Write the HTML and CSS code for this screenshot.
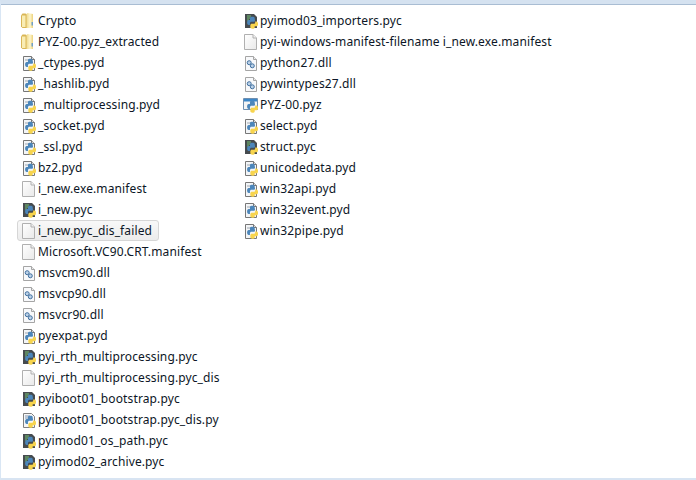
FILE: index.html
```html
<!DOCTYPE html>
<html lang="en">
<head>
<meta charset="utf-8">
<title>Files</title>
<link rel="stylesheet" href="styles.css">
</head>
<body>
<svg class="defs" width="0" height="0" aria-hidden="true">
  <defs>
    <linearGradient id="fg" x1="0" y1="0" x2="1" y2="0"><stop offset="0" stop-color="#efd98c"/><stop offset=".55" stop-color="#fdf5cb"/><stop offset="1" stop-color="#ecd27c"/></linearGradient>
    <linearGradient id="pg" x1="0" y1="0" x2="1" y2="1"><stop offset="0" stop-color="#ffffff"/><stop offset="1" stop-color="#e9e9e9"/></linearGradient>
    <g id="snake">
      <path d="M6.500 6h3.500V4.500C10 3.500 9 3.200 7.500 3.200S5 3.700 5 4.700V6.500H3.700C2.500 6.500 2 7.800 2 9.200s.6 2.600 1.700 2.600H5V10c0-1 .7-1.700 1.700-1.700H9c.8 0 1.300-.5 1.300-1.300V6z" fill="#4c86ba"/>
      <path d="M10.500 8h1.300c1.200 0 1.700 1.300 1.700 2.700s-.5 2.500-1.700 2.500H10v1.300c0 1-1 1.300-2.300 1.300S5.400 15 5.400 14v-2c0-1 .7-1.600 1.600-1.600h2.300c.8 0 1.200-.6 1.200-1.300z" fill="#f7d44e"/>
    </g>
    <symbol id="folder" viewBox="0 0 16 16">
      <path d="M1 2.500 2.500 .5h3L7 1.500V15H2.500L1 13.500z" fill="#d9b656"/>
      <path d="M2 2.500h3.500V14H2z" fill="#f9edb4"/>
      <path d="M6.500 1 7.500 0 13 1v14H6.500z" fill="url(#fg)"/>
      <path d="M11.500 9H13v3.500h-1.500z" fill="#6f9fc9"/>
    </symbol>
    <symbol id="page" viewBox="0 0 16 16">
      <path d="M2.500.5h8.500l3.500 3.500v11.500h-12z" fill="url(#pg)" stroke="#b0b0b0"/>
      <path d="M11 .5v3.500h3.500" fill="#f1f1f1" stroke="#b0b0b0"/>
    </symbol>
    <symbol id="pyd" viewBox="0 0 16 16">
      <path d="M3.500 1.500h8l3 3v11h-11z" fill="#f3f5f7" stroke="#777"/>
      <path d="M11.500 1.500v3h3" fill="#d9d9d9" stroke="#777"/>
      <path d="M5 4h4v2H5z" fill="#c9ced4"/>
      <use href="#snake" transform="translate(3.200 .8) scale(.95)"/>
    </symbol>
    <symbol id="pyc" viewBox="0 0 16 16">
      <path d="M3 1h9l3 3v11H3z" fill="#464b4f"/>
      <path d="M5 3h4M5 5h3M5 7h2" stroke="#74c274"/>
      <use href="#snake" transform="translate(3.200 .8) scale(.95)"/>
    </symbol>
    <symbol id="dis" viewBox="0 0 16 16">
      <path d="M3.500 1.500h8l3 3v11h-11z" fill="#f7f7f7" stroke="#808080"/>
      <path d="M5 4h5M5 6h4" stroke="#7f97b3"/>
      <use href="#snake" transform="translate(3.200 .8) scale(.95)"/>
    </symbol>
    <symbol id="dll" viewBox="0 0 16 16">
      <path d="M3.500 1.500h8l3 3v11h-11z" fill="#f8f9fb" stroke="#a5a5a5"/>
      <path d="M11.500 1.500v3h3" fill="#ececec" stroke="#a5a5a5"/>
      <circle cx="7.200" cy="7.700" r="2" fill="#bcd2e8" stroke="#3f6f9f"/>
      <circle cx="10.300" cy="10.800" r="2" fill="#bcd2e8" stroke="#3f6f9f"/>
    </symbol>
    <symbol id="pyz" viewBox="0 0 16 16">
      <path d="M1.500 1.500h14v11h-14z" fill="#f4f4f4" stroke="#6f8fb0"/>
      <path d="M2 2h13v2.500H2z" fill="#3c87c8"/>
      <use href="#snake" transform="translate(3.200 .8) scale(.95)"/>
    </symbol>
  </defs>
</svg>
<div class="window">
  <div class="listing">
    <ul class="column">
      <li class="item"><svg class="icon"><use href="#folder"/></svg><span>Crypto</span></li>
      <li class="item"><svg class="icon"><use href="#folder"/></svg><span>PYZ-00.pyz_extracted</span></li>
      <li class="item"><svg class="icon"><use href="#pyd"/></svg><span>_ctypes.pyd</span></li>
      <li class="item"><svg class="icon"><use href="#pyd"/></svg><span>_hashlib.pyd</span></li>
      <li class="item"><svg class="icon"><use href="#pyd"/></svg><span>_multiprocessing.pyd</span></li>
      <li class="item"><svg class="icon"><use href="#pyd"/></svg><span>_socket.pyd</span></li>
      <li class="item"><svg class="icon"><use href="#pyd"/></svg><span>_ssl.pyd</span></li>
      <li class="item"><svg class="icon"><use href="#pyd"/></svg><span>bz2.pyd</span></li>
      <li class="item"><svg class="icon"><use href="#page"/></svg><span>i_new.exe.manifest</span></li>
      <li class="item"><svg class="icon"><use href="#pyc"/></svg><span>i_new.pyc</span></li>
      <li class="item selected"><svg class="icon"><use href="#page"/></svg><span>i_new.pyc_dis_failed</span></li>
      <li class="item"><svg class="icon"><use href="#page"/></svg><span>Microsoft.VC90.CRT.manifest</span></li>
      <li class="item"><svg class="icon"><use href="#dll"/></svg><span>msvcm90.dll</span></li>
      <li class="item"><svg class="icon"><use href="#dll"/></svg><span>msvcp90.dll</span></li>
      <li class="item"><svg class="icon"><use href="#dll"/></svg><span>msvcr90.dll</span></li>
      <li class="item"><svg class="icon"><use href="#pyd"/></svg><span>pyexpat.pyd</span></li>
      <li class="item"><svg class="icon"><use href="#pyc"/></svg><span>pyi_rth_multiprocessing.pyc</span></li>
      <li class="item"><svg class="icon"><use href="#page"/></svg><span>pyi_rth_multiprocessing.pyc_dis</span></li>
      <li class="item"><svg class="icon"><use href="#pyc"/></svg><span>pyiboot01_bootstrap.pyc</span></li>
      <li class="item"><svg class="icon"><use href="#dis"/></svg><span>pyiboot01_bootstrap.pyc_dis.py</span></li>
      <li class="item"><svg class="icon"><use href="#pyc"/></svg><span>pyimod01_os_path.pyc</span></li>
      <li class="item"><svg class="icon"><use href="#pyc"/></svg><span>pyimod02_archive.pyc</span></li>
    </ul>
    <ul class="column">
      <li class="item"><svg class="icon"><use href="#pyc"/></svg><span>pyimod03_importers.pyc</span></li>
      <li class="item"><svg class="icon"><use href="#page"/></svg><span>pyi-windows-manifest-filename i_new.exe.manifest</span></li>
      <li class="item"><svg class="icon"><use href="#dll"/></svg><span>python27.dll</span></li>
      <li class="item"><svg class="icon"><use href="#dll"/></svg><span>pywintypes27.dll</span></li>
      <li class="item"><svg class="icon"><use href="#pyz"/></svg><span>PYZ-00.pyz</span></li>
      <li class="item"><svg class="icon"><use href="#pyd"/></svg><span>select.pyd</span></li>
      <li class="item"><svg class="icon"><use href="#pyc"/></svg><span>struct.pyc</span></li>
      <li class="item"><svg class="icon"><use href="#pyd"/></svg><span>unicodedata.pyd</span></li>
      <li class="item"><svg class="icon"><use href="#pyd"/></svg><span>win32api.pyd</span></li>
      <li class="item"><svg class="icon"><use href="#pyd"/></svg><span>win32event.pyd</span></li>
      <li class="item"><svg class="icon"><use href="#pyd"/></svg><span>win32pipe.pyd</span></li>
    </ul>
  </div>
</div>
</body>
</html>
```

FILE: styles.css
```css
* { box-sizing: border-box; }
html, body { margin: 0; padding: 0; }
body { width: 696px; height: 480px; overflow: hidden; background: #fff; font-family: "Noto Sans", "Open Sans", sans-serif; font-size: 12px; letter-spacing: .12px; color: #0c1626; }
.defs { display: block; height: 0; }
.window { width: 696px; height: 480px; background: #fff; border-top: 4px solid #d5e2f0; border-left: 1px solid #d9e6f4; border-bottom: 2px solid #d8e4f2; padding: 6px 0 0 16px; box-shadow: inset 0 1px 0 #a9bdd3; }
.listing { display: flex; }
.column { list-style: none; margin: 0; padding: 0; width: 222px; }
.item { display: flex; align-items: center; height: 21px; padding-left: 2px; gap: 2px; white-space: nowrap; border: 1px solid transparent; border-radius: 3px; width: max-content; }
.item span { line-height: 19px; }
.icon { width: 16px; height: 16px; flex: none; align-self: flex-start; margin-top: 2px; }
.selected { background: linear-gradient(#f8f8f8, #ececec); border-color: #d6d6d6; padding-right: 6px; }
```
